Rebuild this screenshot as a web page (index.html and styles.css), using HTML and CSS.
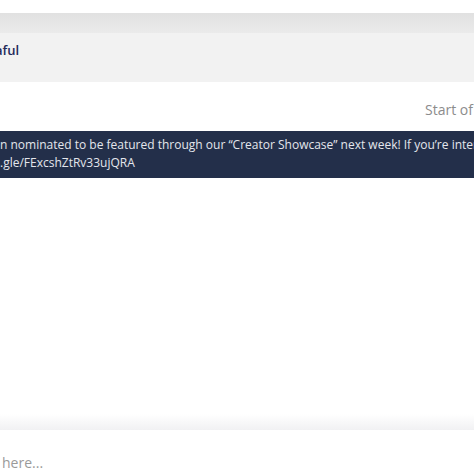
FILE: index.html
```html
<!DOCTYPE html>
<html lang="en">
<head>
    <meta charset="UTF-8">
    <meta name="viewport" content="width=device-width, initial-scale=1.0">
    <title>Chat</title>
    <link rel="stylesheet" href="styles.css">
</head>
<body>
    <div class="chat">
        <div class="top-space"></div>
        <div class="top-shadow"></div>
        <div class="title-bar">
            <span class="title">aful</span>
        </div>
        <div class="meta">
            <span class="start">Start of</span>
        </div>
        <div class="banner">
            <p>n nominated to be featured through our “Creator Showcase” next week! If you’re interested, fill out this form</p>
            <p>.gle/FExcshZtRv33ujQRA</p>
        </div>
        <div class="messages"></div>
        <div class="composer-shadow"></div>
        <div class="composer">
            <span class="placeholder">here...</span>
        </div>
    </div>
</body>
</html>
```

FILE: styles.css
```css
* {
    margin: 0;
    padding: 0;
    box-sizing: border-box;
}

body {
    font-family: 'Open Sans', 'Segoe UI', sans-serif;
    background: white;
    width: 474px;
    height: 474px;
    overflow: hidden;
}

.chat {
    display: flex;
    flex-direction: column;
    height: 474px;
}

.top-space {
    height: 13px;
    background: white;
}

.top-shadow {
    height: 20px;
    background: linear-gradient(180deg, #e1e1e1 0%, #ebebeb 100%);
}

.title-bar {
    height: 49px;
    background: #f2f2f2;
    padding-top: 8px;
    overflow: hidden;
}

.title {
    display: block;
    font-size: 13px;
    line-height: 19px;
    font-weight: 600;
    color: #232a5a;
    margin-left: -5px;
}

.meta {
    height: 49px;
    display: flex;
    align-items: center;
    justify-content: flex-end;
    padding-top: 5px;
}

.start {
    font-size: 14px;
    color: #8c8c8c;
    white-space: nowrap;
    margin-right: 1px;
}

.banner {
    height: 47px;
    background: #232f4a;
    color: #e4e6ec;
    font-size: 12px;
    line-height: 18px;
    padding-top: 5px;
    white-space: nowrap;
    overflow: hidden;
}

.messages {
    flex: 1;
}

.composer-shadow {
    height: 16px;
    background: linear-gradient(180deg, #ffffff 0%, #f1f1f3 100%);
}

.composer {
    height: 44px;
    padding-top: 21px;
}

.placeholder {
    font-size: 14px;
    color: #9a9a9a;
    margin-left: 2px;
}
```
